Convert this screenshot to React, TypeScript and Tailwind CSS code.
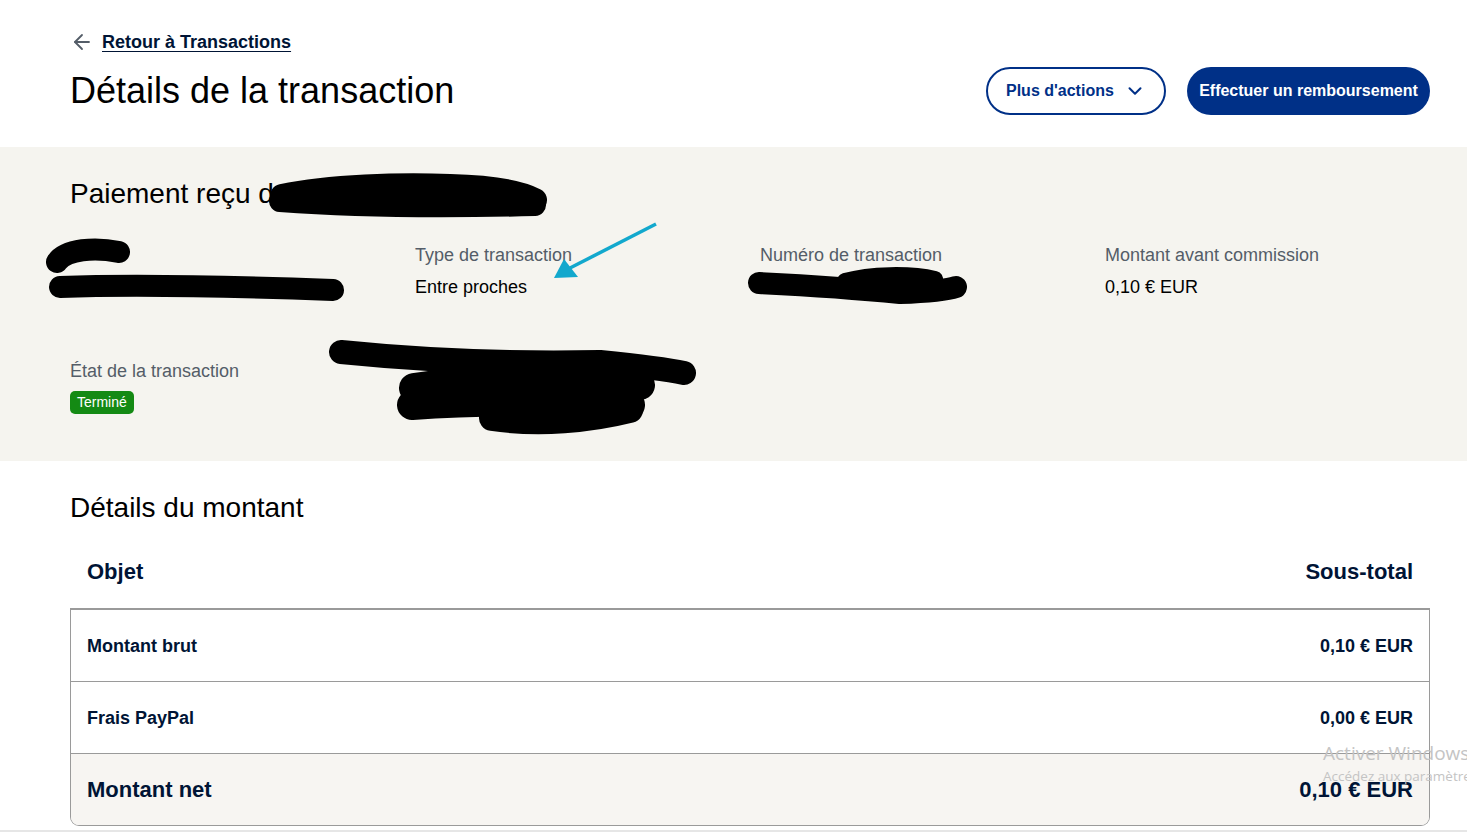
import { ArrowLeft, ChevronDown } from 'lucide-react'

const font = { fontFamily: '"Liberation Sans", Arial, sans-serif' }

function Field({ label, value }: { label: string; value?: string }) {
  return (
    <div>
      <div className="text-[18px] leading-[22px] text-[#545d68]">{label}</div>
      {value && <div className="mt-[10px] text-[18px] leading-[22px] text-black">{value}</div>}
    </div>
  )
}

function Row({ label, amount, total }: { label: string; amount: string; total?: boolean }) {
  return (
    <div
      className={
        total
          ? 'flex h-[71px] items-center justify-between rounded-b-[8px] bg-[#f7f5f2] px-[16px] text-[22px] font-bold text-[#001435]'
          : 'flex h-[72px] items-center justify-between border-b border-[#9a9a9a] px-[16px] pt-[2px] text-[18px] font-bold text-[#001435]'
      }
    >
      <span>{label}</span>
      <span>{amount}</span>
    </div>
  )
}

// redaction marks + annotation arrow drawn over the page
function Overlay() {
  return (
    <svg
      className="pointer-events-none absolute left-0 top-0"
      width="1467"
      height="832"
      viewBox="0 0 1467 832"
      fill="none"
      strokeLinecap="round"
      strokeLinejoin="round"
    >
      <g stroke="#000">
        <path d="M282 196 C330 186 400 184 450 186 C490 187 520 192 535 200" strokeWidth="24" />
        <path d="M280 201 C360 207 460 207 535 205" strokeWidth="22" />
        <path d="M119 252 C95 247 66 249 57 262" strokeWidth="22" />
        <path d="M60 287 C150 284 250 287 333 290" strokeWidth="22" />
        <path d="M759 283 C800 285 850 288 900 293 C930 292 950 289 956 287" strokeWidth="22" />
        <path d="M845 281 C870 274 910 273 935 279" strokeWidth="16" />
        <path d="M341 352 C420 360 500 364 600 362 C640 366 670 370 684 373" strokeWidth="24" />
        <path d="M414 388 C480 378 580 375 640 385" strokeWidth="30" />
        <path d="M412 405 C480 400 580 400 630 405" strokeWidth="30" />
        <path d="M492 418 C540 425 590 420 630 410" strokeWidth="26" />
      </g>
      <path d="M656 224 L570 268" stroke="#12a8cd" strokeWidth="3.5" strokeLinecap="butt" />
      <path d="M554 278 L564 259 L578 277 Z" fill="#12a8cd" />
    </svg>
  )
}

export default function App() {
  return (
    <div className="relative h-[832px] w-[1467px] overflow-hidden bg-white" style={font}>
      <header className="h-[147px] pl-[70px] pr-[37px] pt-[31px]">
        <a className="flex h-[22px] items-center gap-[8px] text-[18px] font-bold text-[#001435]">
          <ArrowLeft className="h-[24px] w-[24px] text-[#545d68]" strokeWidth={1.8} />
          <span className="underline underline-offset-[3px]">Retour à Transactions</span>
        </a>
        <div className="mt-[14px] flex h-[48px] items-center justify-between">
          <h1 className="text-[36px] leading-[44px] text-black">Détails de la transaction</h1>
          <div className="flex gap-[21px]">
            <button className="flex h-[48px] w-[180px] items-center gap-[10px] rounded-full border-2 border-[#003087] pl-[18px] text-[16px] font-bold text-[#003087]">
              Plus d'actions
              <ChevronDown className="h-[22px] w-[22px]" strokeWidth={2.2} />
            </button>
            <button className="h-[48px] w-[243px] rounded-full bg-[#003087] text-[16px] font-bold text-white">
              Effectuer un remboursement
            </button>
          </div>
        </div>
      </header>

      <section className="h-[314px] bg-[#f5f4ef] pl-[70px] pr-[37px] pt-[30px]">
        <h2 className="text-[28px] leading-[34px] text-black">Paiement reçu d</h2>
        <div className="mt-[33px] grid grid-cols-[345px_345px_345px_1fr]">
          <div />
          <Field label="Type de transaction" value="Entre proches" />
          <Field label="Numéro de transaction" />
          <Field label="Montant avant commission" value="0,10 € EUR" />
        </div>
        <div className="mt-[62px]">
          <Field label="État de la transaction" />
          <span className="mt-[9px] inline-flex h-[23px] items-center rounded-[5px] bg-[#148a14] px-[7px] text-[14px] text-white">
            Terminé
          </span>
        </div>
      </section>

      <section className="pl-[70px] pr-[37px] pt-[30px]">
        <h2 className="text-[28px] leading-[34px] text-black">Détails du montant</h2>
        <div className="mt-[33px] flex justify-between px-[17px] text-[22px] font-bold leading-[27px] text-[#001435]">
          <span>Objet</span>
          <span>Sous-total</span>
        </div>
        <div className="mt-[23px] rounded-b-[9px] border border-t-2 border-[#9a9a9a]">
          <Row label="Montant brut" amount="0,10 € EUR" />
          <Row label="Frais PayPal" amount="0,00 € EUR" />
          <Row label="Montant net" amount="0,10 € EUR" total />
        </div>
      </section>
      <div className="absolute bottom-0 left-0 h-[2px] w-full bg-[#e6e6e6]" />

      <Overlay />

      <div
        className="pointer-events-none absolute left-[1323px] top-[741px] whitespace-nowrap text-[#c4c4c4]"
        style={{ fontFamily: '"Open Sans", "Noto Sans", sans-serif' }}
      >
        <div className="text-[19px] leading-[25px]">Activer Windows</div>
        <div className="text-[13.5px] leading-[20px]">Accédez aux paramètres pour activer Windows.</div>
      </div>
    </div>
  )
}
